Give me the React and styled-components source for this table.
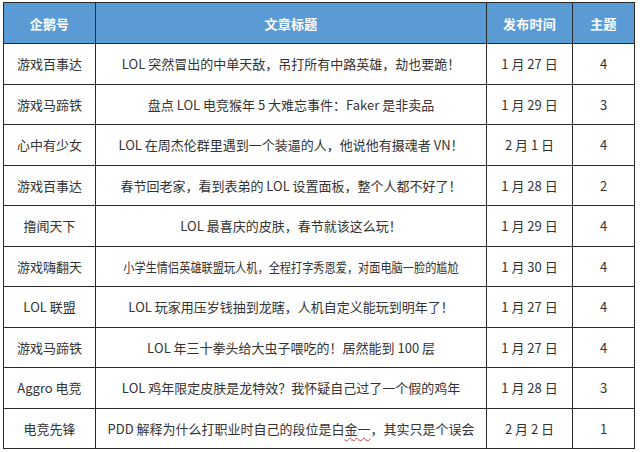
import React from "react";
import styled, { createGlobalStyle } from "styled-components";

const Global = createGlobalStyle`
  html, body { margin: 0; padding: 0; background: #fff; }
  body { font-family: "Noto Sans CJK SC", "Microsoft YaHei", "Noto Sans", sans-serif; }
`;

const Page = styled.div`
  width: 640px;
  height: 452px;
  padding: 2px 0 0 3px;
  box-sizing: border-box;
  background: #fff;
`;

const Table = styled.table`
  border-collapse: collapse;
  table-layout: fixed;
  width: 631px;
  border: 1px solid #2a2a2a;
`;

const Col = styled.col`
  width: ${(p) => p.$w}px;
`;

const HeadCell = styled.th`
  background: #5b9bd5;
  color: #fff;
  font-weight: 700;
  font-size: 13px;
  height: 40px;
  padding: 0;
  text-align: center;
  border: 1px solid #2a2a2a;
  letter-spacing: 0.2px;
`;

const Cell = styled.td`
  height: 39.5px;
  padding: 0;
  text-align: center;
  font-size: 13px;
  color: #333;
  border: 1px solid #2a2a2a;
  white-space: nowrap;
  overflow: hidden;
`;

const Title = styled.span`
  display: inline-block;
  transform: ${(p) => (p.$squeeze ? "scaleX(0.86)" : "none")};
  transform-origin: center;
`;

const Squiggle = styled.span`
  text-decoration: underline wavy #d04040;
  text-decoration-thickness: 1px;
  text-underline-offset: 3px;
`;

const rows = [
  ["游戏百事达", "LOL 突然冒出的中单天敌，吊打所有中路英雄，劫也要跪！", "1 月 27 日", "4"],
  ["游戏马蹄铁", "盘点 LOL 电竞猴年 5 大难忘事件：Faker 是非卖品", "1 月 29 日", "3"],
  ["心中有少女", "LOL 在周杰伦群里遇到一个装逼的人，他说他有摄魂者 VN！", "2 月 1 日", "4"],
  ["游戏百事达", "春节回老家，看到表弟的 LOL 设置面板，整个人都不好了！", "1 月 28 日", "2"],
  ["撸闻天下", "LOL 最喜庆的皮肤，春节就该这么玩！", "1 月 29 日", "4"],
  ["游戏嗨翻天", "小学生情侣英雄联盟玩人机，全程打字秀恩爱，对面电脑一脸的尴尬", "1 月 30 日", "4", true],
  ["LOL 联盟", "LOL 玩家用压岁钱抽到龙瞎，人机自定义能玩到明年了！", "1 月 27 日", "4"],
  ["游戏马蹄铁", "LOL 年三十拳头给大虫子喂吃的！居然能到 100 层", "1 月 27 日", "4"],
  ["Aggro 电竞", "LOL 鸡年限定皮肤是龙特效？我怀疑自己过了一个假的鸡年", "1 月 28 日", "3"],
  ["电竞先锋", null, "2 月 2 日", "1"],
];

export default function App() {
  return (
    <Page>
      <Global />
      <Table>
        <colgroup>
          <Col $w={92} />
          <Col $w={391} />
          <Col $w={86} />
          <Col $w={62} />
        </colgroup>
        <thead>
          <tr>
            <HeadCell>企鹅号</HeadCell>
            <HeadCell>文章标题</HeadCell>
            <HeadCell>发布时间</HeadCell>
            <HeadCell>主题</HeadCell>
          </tr>
        </thead>
        <tbody>
          {rows.map((r, i) => (
            <tr key={i}>
              <Cell>{r[0]}</Cell>
              <Cell>
                <Title $squeeze={r[4]}>
                  {r[1] ?? (
                    <>
                      PDD 解释为什么打职业时自己的段位是白<Squiggle>金一</Squiggle>，其实只是个误会
                    </>
                  )}
                </Title>
              </Cell>
              <Cell>{r[2]}</Cell>
              <Cell>{r[3]}</Cell>
            </tr>
          ))}
        </tbody>
      </Table>
    </Page>
  );
}
